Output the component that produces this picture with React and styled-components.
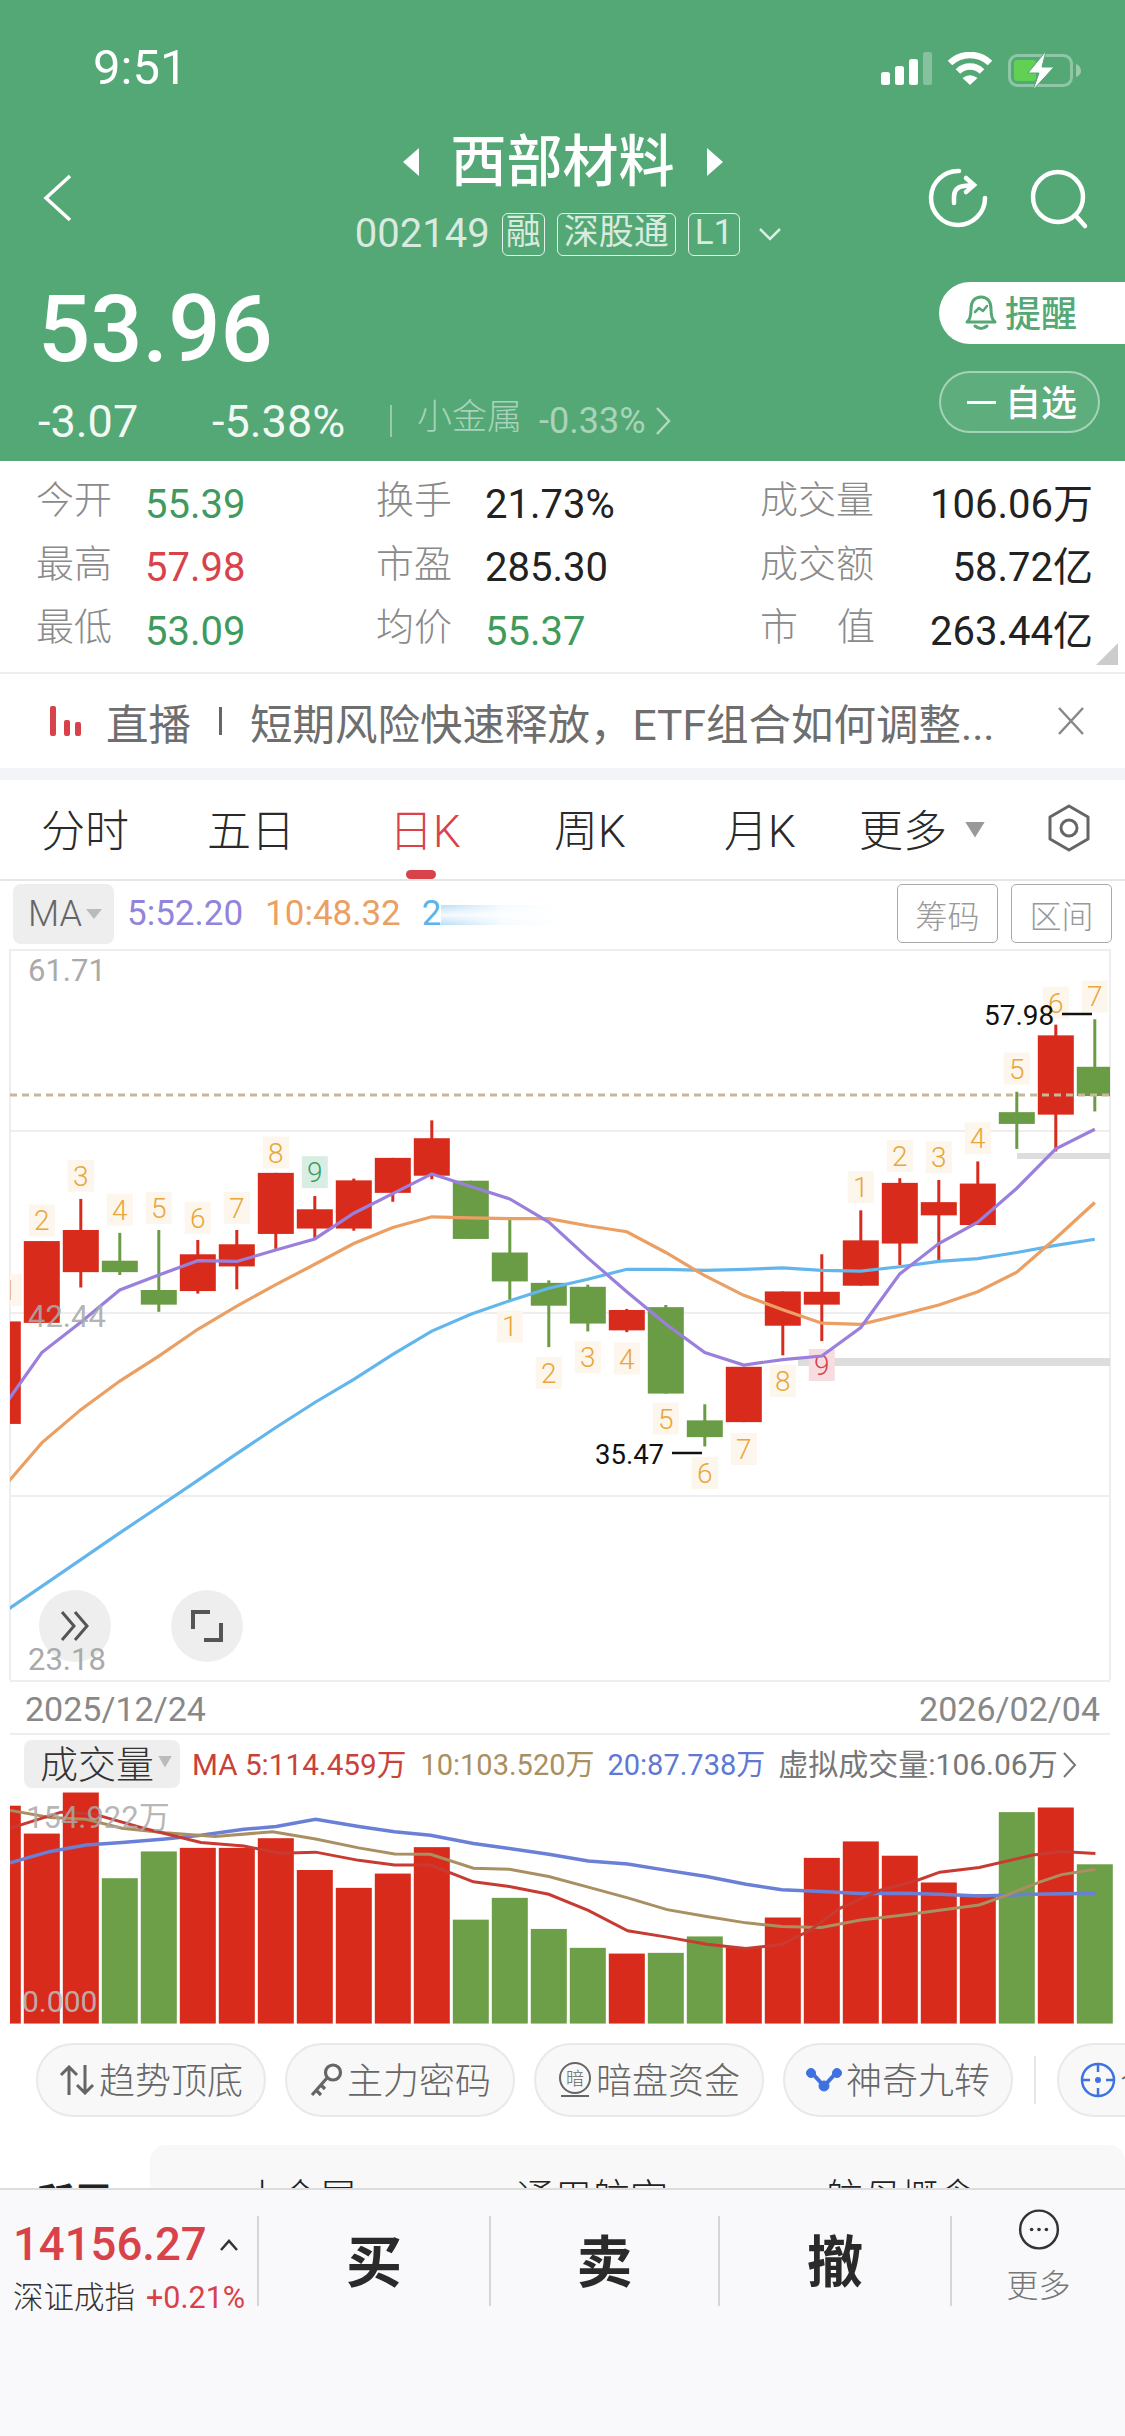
import React from "react";
import styled, { createGlobalStyle } from "styled-components";

const FONT = `Roboto, "Noto Sans CJK SC", sans-serif`;
const GREEN = "#53a875";
const RED = "#d92b1c";
const BAR_GREEN = "#6a9c45";

const GlobalStyle = createGlobalStyle`
  html, body {
    margin: 0;
    padding: 0;
    background: #fff;
    font-family: ${FONT};
  }
  * {
    box-sizing: border-box;
  }
`;

const Page = styled.div`
  width: 1125px;
  height: 2436px;
  overflow: hidden;
  background: #fff;
  display: flex;
  flex-direction: column;
`;

/* ---------- header ---------- */

const Header = styled.header`
  height: 461px;
  flex: none;
  background: ${GREEN};
  color: #fff;
  display: flex;
  flex-direction: column;
`;

const StatusBar = styled.div`
  height: 130px;
  padding: 44px 43px 0 93px;
  display: flex;
  justify-content: space-between;
  align-items: flex-start;
`;

const Clock = styled.span`
  font-size: 49px;
  line-height: 48px;
`;

const StatusIcons = styled.div`
  display: flex;
  align-items: flex-start;
  gap: 15px;
  padding-top: 8px;
`;

const Nav = styled.div`
  height: 152px;
  display: grid;
  grid-template-columns: 1fr auto 1fr;
`;

const BackIcon = styled.svg`
  margin: 44px 0 0 42px;
`;

const TitleBlock = styled.div`
  display: flex;
  flex-direction: column;
  align-items: center;
`;

const TitleRow = styled.div`
  display: flex;
  align-items: center;
  gap: 30px;
  height: 64px;
`;

const Title = styled.h1`
  margin: 0;
  font-size: 56px;
  line-height: 64px;
  font-weight: 500;
`;

const CodeRow = styled.div`
  margin-top: 18px;
  display: flex;
  align-items: center;
  gap: 12px;
  height: 44px;
  margin-left: 12px;
  color: rgba(255, 255, 255, 0.78);
`;

const Code = styled.span`
  font-size: 40px;
  line-height: 44px;
`;

const Chip = styled.span`
  height: 43px;
  min-width: 43px;
  padding: 0 6px;
  border: 1.5px solid rgba(255, 255, 255, 0.85);
  border-radius: 6px;
  font-size: 35px;
  line-height: 38px;
  font-weight: 400;
  text-align: center;
  white-space: nowrap;
  &:nth-child(2) {
    padding: 0 2px;
  }
`;

const NavActions = styled.div`
  display: flex;
  justify-content: flex-end;
  gap: 42px;
  padding: 38px 35px 0 0;
  align-items: flex-start;
`;

const PriceRow = styled.div`
  flex: 1;
  display: flex;
  justify-content: space-between;
`;

const PriceBlock = styled.div`
  padding-left: 38px;
`;

const BigPrice = styled.div`
  font-size: 92px;
  line-height: 96px;
  font-weight: 500;
`;

const ChangeRow = styled.div`
  display: flex;
  align-items: center;
  margin-top: 21px;
  height: 44px;
`;

const Change = styled.span`
  font-size: 45px;
  width: ${(p) => p.$w}px;
  color: #f2f8f4;
`;

const Sector = styled.span`
  margin-left: 38px;
  padding-left: 25px;
  border-left: 2px solid rgba(255, 255, 255, 0.4);
  height: 32px;
  display: flex;
  align-items: center;
  gap: 17px;
  color: rgba(255, 255, 255, 0.5);
`;

const SectorName = styled.span`
  font-size: 35px;
  line-height: 32px;
  font-weight: 300;
  margin-top: -6px;
`;

const SectorPct = styled.span`
  font-size: 36px;
`;

const SideButtons = styled.div`
  width: 186px;
  display: flex;
  flex-direction: column;
  gap: 27px;
`;

const RemindButton = styled.div`
  height: 62px;
  background: #fff;
  color: ${GREEN};
  border-radius: 31px 0 0 31px;
  display: flex;
  align-items: center;
  padding: 0 0 5px 24px;
  gap: 6px;
  font-size: 36px;
  font-weight: 500;
`;

const WatchButton = styled.div`
  width: 161px;
  height: 62px;
  border: 2px solid rgba(255, 255, 255, 0.45);
  background: rgba(255, 255, 255, 0.06);
  border-radius: 31px;
  display: flex;
  align-items: center;
  padding: 0 0 5px 64px;
  font-size: 36px;
  font-weight: 500;
  position: relative;
  &::before {
    content: "";
    position: absolute;
    left: 26px;
    top: 28px;
    width: 29px;
    height: 3px;
    background: #fff;
  }
`;

/* ---------- quote table ---------- */

const Stats = styled.section`
  position: relative;
  flex: none;
  height: 213px;
  padding: 11px 32px 0 36px;
  border-bottom: 2px solid #eee;
  display: grid;
  grid-template-columns: 340px 384px 333px;
  grid-auto-rows: 63.5px;
`;

const StatCell = styled.div`
  display: flex;
  align-items: center;
`;

const StatLabel = styled.span`
  font-size: 38px;
  line-height: 44px;
  margin-top: -7px;
  color: #8a8a8a;
  font-weight: 300;
  width: ${(p) => p.$w || 109}px;
  display: flex;
  justify-content: ${(p) => (p.$spread ? "space-between" : "flex-start")};
`;

const StatValue = styled.span`
  font-size: 40px;
  line-height: 44px;
  margin-top: 2px;
  color: ${(p) => p.$color || "#222"};
  margin-left: ${(p) => (p.$right ? "auto" : "0")};
`;

const CornerMark = styled.div`
  position: absolute;
  right: 7px;
  bottom: 7px;
  width: 22px;
  height: 22px;
  background: #ccc;
  clip-path: polygon(100% 0, 100% 100%, 0 100%);
`;

/* ---------- live strip ---------- */

const LiveStrip = styled.div`
  flex: none;
  height: 94px;
  display: flex;
  align-items: center;
  padding-left: 50px;
  color: #6e6e6e;
  font-size: 42.5px;
  font-weight: 400;
  white-space: nowrap;
`;

const LiveTag = styled.span`
  margin-left: 24px;
`;

const LiveSep = styled.span`
  width: 3px;
  height: 28px;
  margin: 0 28px;
  background: #666;
`;

const LiveClose = styled.svg`
  margin-left: auto;
  margin-right: 40px;
`;

const Band = styled.div`
  flex: none;
  height: 12px;
  background: #f3f4f8;
`;

/* ---------- period tabs ---------- */

const Tabs = styled.nav`
  flex: none;
  height: 101px;
  display: flex;
  align-items: center;
  border-bottom: 2px solid #e6e6e6;
  position: relative;
  padding-bottom: 4px;
`;

const TabCells = styled.div`
  display: grid;
  grid-template-columns: 170px 162px 186px 144px 196px 90px;
`;

const Tab = styled.span`
  font-size: 44px;
  font-weight: 300;
  color: ${(p) => (p.$active ? "#d8424a" : "#2a2a2a")};
  text-align: center;
`;

const TabMark = styled.i`
  position: absolute;
  left: 406px;
  bottom: 0;
  width: 30px;
  height: 9px;
  border-radius: 5px;
  background: #d8424a;
`;

const Caret = styled.i`
  display: inline-block;
  width: ${(p) => p.$w}px;
  height: ${(p) => p.$h}px;
  background: ${(p) => p.$color || "#999"};
  clip-path: polygon(0 0, 100% 0, 50% 100%);
  margin-left: ${(p) => p.$ml || 0}px;
  margin-top: ${(p) => p.$mt || 0}px;
  flex: none;
`;

const GearIcon = styled.svg`
  margin-left: auto;
  margin-right: 34px;
`;

/* ---------- indicator row ---------- */

const IndicatorRow = styled.div`
  flex: none;
  height: 68px;
  padding: 3px 13px 0;
  display: flex;
  align-items: flex-start;
`;

const Picker = styled.div`
  height: 60px;
  width: ${(p) => p.$w}px;
  padding-left: ${(p) => p.$pl}px;
  border-radius: 8px;
  background: #eee;
  display: flex;
  align-items: center;
  color: ${(p) => p.$color};
  font-size: ${(p) => p.$size}px;
  font-weight: 300;
`;

const MaValue = styled.span`
  font-size: 35px;
  line-height: 60px;
  color: ${(p) => p.$color};
  margin-left: ${(p) => p.$ml}px;
`;

const MaFade = styled.i`
  width: 125px;
  height: 20px;
  margin-top: 21px;
  background: linear-gradient(90deg, #b9def6, rgba(220, 240, 252, 0.3) 50%, rgba(255, 255, 255, 0));
  mask-image: linear-gradient(180deg, #000, rgba(0, 0, 0, 0.15) 50%, #000);
`;

const ToolButton = styled.span`
  width: 101px;
  height: 59px;
  border: 1.5px solid #aaa;
  border-radius: 5px;
  color: #999;
  font-size: 32px;
  font-weight: 300;
  display: flex;
  align-items: center;
  justify-content: center;
  margin-left: ${(p) => p.$ml};
`;

/* ---------- charts ---------- */

const KChartWrap = styled.div`
  flex: none;
  position: relative;
  height: 731px;
`;

const ChartSvg = styled.svg`
  display: block;
  text {
    font-family: ${FONT};
  }
`;

const RoundButton = styled.div`
  position: absolute;
  left: ${(p) => p.$left}px;
  top: 641px;
  width: 72px;
  height: 72px;
  border-radius: 50%;
  background: #eee;
  display: flex;
  align-items: center;
  justify-content: center;
`;

const AxisOverlay = styled.span`
  position: absolute;
  left: 28px;
  top: 696px;
  font-size: 31px;
  line-height: 30px;
  color: #aaa;
`;

const DateRow = styled.div`
  flex: none;
  height: 55px;
  margin: 0 15px 0 10px;
  padding: 3px 10px 0 15px;
  display: flex;
  justify-content: space-between;
  align-items: center;
  font-size: 34px;
  color: #888;
  border-top: 2px solid #eee;
  border-bottom: 2px solid #eee;
`;

const VolumeRow = styled.div`
  flex: none;
  height: 55px;
  padding: 5px 0 0 24px;
  display: flex;
  align-items: flex-start;
  white-space: nowrap;
`;

const VolPicker = styled(Picker)`
  height: 48px;
  padding-bottom: 5px;
`;

const VolLegend = styled.span`
  font-size: ${(p) => p.$size}px;
  line-height: 50px;
  color: ${(p) => p.$color};
  margin-left: ${(p) => p.$ml}px;
`;

/* ---------- pills ---------- */

const PillRow = styled.div`
  flex: none;
  height: 74px;
  margin-top: 2px;
  display: flex;
  gap: 19px;
  padding-left: 36px;
  overflow: hidden;
  align-items: center;
`;

const Pill = styled.div`
  flex: none;
  width: 230px;
  height: 74px;
  padding-bottom: 5px;
  border-radius: 37px;
  border: 2px solid #e9e9e9;
  background: #f8f8f8;
  color: #666;
  font-size: 36px;
  font-weight: 300;
  white-space: nowrap;
  display: flex;
  align-items: center;
  justify-content: center;
  gap: 4px;
  svg {
    margin-top: 5px;
    flex: none;
  }
`;

const PillDivider = styled.i`
  flex: none;
  width: 2px;
  height: 48px;
  margin: 0 2px;
  background: #e6e6e6;
`;

const Related = styled.div`
  flex: 1;
  min-height: 0;
  padding-top: 28px;
  overflow: hidden;
  display: flex;
  font-size: 38px;
  color: #222;
`;

const RelatedTitle = styled.span`
  width: 150px;
  padding: 26px 0 0 36px;
  font-weight: 700;
`;

const RelatedCard = styled.div`
  flex: 1;
  height: 120px;
  border-radius: 16px 16px 0 0;
  background: #f8f8f8;
  padding: 22px 0 0 93px;
  display: grid;
  grid-template-columns: 273px 309px 200px;
  font-weight: 300;
`;

/* ---------- footer ---------- */

const Footer = styled.footer`
  flex: none;
  height: 248px;
  border-top: 2px solid #ddd;
  background: #f9f9fb;
  display: flex;
  align-items: flex-start;
  padding-top: 26px;
`;

const IndexBlock = styled.div`
  width: 257px;
  height: 90px;
  padding-left: 13px;
`;

const IndexValue = styled.div`
  font-size: 45.5px;
  line-height: 50px;
  color: #d8424a;
  margin-top: 4px;
  font-weight: 500;
  display: flex;
  align-items: center;
`;

const IndexSub = styled.div`
  margin-top: 10px;
  white-space: nowrap;
  font-size: 30.5px;
  line-height: 36px;
  color: #333;
  font-weight: 300;
`;

const IndexPct = styled.span`
  color: #d8424a;
  margin-left: 11px;
  font-weight: 400;
`;

const TradeCell = styled.div`
  width: ${(p) => p.$w}px;
  height: 90px;
  padding-bottom: 8px;
  border-left: 2px solid #d6d6d6;
  display: flex;
  align-items: center;
  justify-content: center;
  font-size: 56px;
  font-weight: 700;
  color: #2a2a2a;
`;

const MoreCell = styled.div`
  flex: 1;
  height: 90px;
  border-left: 2px solid #d6d6d6;
  display: flex;
  flex-direction: column;
  align-items: center;
  font-size: 32px;
  font-weight: 300;
  color: #777;
`;

const MoreIcon = styled.svg`
  margin-top: -7px;
  margin-bottom: 10px;
`;

/* ---------- chart data, read off the screenshot at 2.8x ---------- */

const px = (i) => 2.8 + 39 * i;
const py = (z) => 940 + z / 2.8;
const vy = (z) => 1480 + z / 2.8;
const vx = (z) => z / 1.394;

// [index, body top, body bottom, wick top, wick bottom, up]
const CANDLES = [
  [0, 1068, 1355, 1068, 1355, 1],
  [1, 843, 1072, 843, 1072, 1],
  [2, 812, 930, 725, 973, 1],
  [3, 898, 930, 820, 938, 0],
  [4, 980, 1021, 812, 1041, 0],
  [5, 880, 983, 840, 990, 1],
  [6, 852, 914, 812, 978, 1],
  [7, 652, 823, 652, 865, 1],
  [8, 754, 808, 717, 838, 1],
  [9, 673, 808, 668, 814, 1],
  [10, 610, 708, 610, 733, 1],
  [11, 555, 660, 505, 670, 1],
  [12, 674, 837, 674, 837, 0],
  [13, 875, 956, 783, 1008, 0],
  [14, 960, 1024, 953, 1140, 0],
  [15, 971, 1074, 965, 1096, 0],
  [16, 1036, 1093, 1033, 1098, 1],
  [17, 1028, 1270, 1022, 1270, 0],
  [18, 1345, 1392, 1300, 1418, 0],
  [19, 1195, 1350, 1195, 1350, 1],
  [20, 984, 1080, 984, 1163, 1],
  [21, 985, 1021, 880, 1123, 1],
  [22, 841, 968, 757, 968, 1],
  [23, 680, 850, 667, 910, 1],
  [24, 734, 771, 672, 898, 1],
  [25, 682, 798, 620, 798, 1],
  [26, 482, 515, 425, 585, 0],
  [27, 267, 489, 237, 592, 1],
  [28, 355, 437, 222, 480, 0],
];

// [index, y, digit, tone]
const NINE_TURN = [
  [0.16, 980, 1], [1, 785, 2], [2, 660, 3], [3, 755, 4], [4, 750, 5],
  [5, 778, 6], [6, 750, 7], [7, 595, 8], [8, 650, 9, "green"],
  [13, 1082, 1], [14, 1212, 2], [15, 1168, 3], [16, 1172, 4], [17, 1340, 5],
  [18, 1492, 6], [19, 1425, 7], [20, 1235, 8], [21, 1190, 9, "red"],
  [22, 692, 1], [23, 605, 2], [24, 608, 3], [25, 555, 4], [26, 360, 5],
  [27, 175, 6], [28, 158, 7],
];

const TONES = {
  green: { box: "#d9eee3", text: "#3f9a68" },
  red: { box: "#f8dde0", text: "#d8424a" },
  orange: { box: "#fdf6ec", text: "#e8a63c" },
};

const MA5 = [1310, 1155, 1070, 980, 938, 898, 900, 868, 837, 765, 710, 655, 690, 725, 790, 890, 985, 1075, 1155, 1190, 1175, 1165, 1085, 935, 850, 790, 695, 585, 530];
const MA10 = [1535, 1408, 1315, 1235, 1165, 1090, 1025, 965, 908, 850, 805, 775, 778, 780, 780, 800, 817, 875, 940, 995, 1035, 1073, 1076, 1050, 1022, 985, 930, 835, 735];
const MA20 = [1884, 1810, 1735, 1660, 1587, 1513, 1438, 1365, 1295, 1230, 1160, 1095, 1048, 1010, 975, 950, 922, 922, 925, 922, 918, 925, 927, 915, 900, 892, 875, 855, 838];

const VOL_TOPS = [
  [912, 1], [990, 1], [875, 1], [1115, 0], [1040, 0], [1030, 1], [1030, 1], [1003, 1], [1092, 1], [1142, 1],
  [1102, 1], [1028, 1], [1231, 0], [1170, 0], [1257, 0], [1310, 0], [1326, 1], [1324, 0], [1278, 0], [1310, 1],
  [1225, 1], [1058, 1], [1012, 1], [1052, 1], [1127, 1], [1160, 1], [930, 0], [917, 1], [1076, 0],
];

const VOL_RED = [[14, 975], [85, 930], [130, 935], [200, 975], [280, 1015], [340, 1025], [390, 1045], [440, 1042], [500, 1065], [550, 1078], [600, 1078], [660, 1125], [710, 1138], [765, 1160], [820, 1205], [875, 1262], [930, 1280], [985, 1300], [1040, 1312], [1090, 1300], [1130, 1260], [1170, 1200], [1225, 1150], [1280, 1120], [1310, 1098], [1365, 1085], [1440, 1050], [1480, 1040], [1527, 1046]];
const VOL_TAN = [[14, 925], [70, 945], [120, 950], [170, 975], [230, 988], [300, 998], [380, 985], [440, 1005], [500, 1030], [550, 1047], [600, 1048], [660, 1087], [710, 1090], [765, 1110], [820, 1140], [875, 1170], [930, 1203], [985, 1222], [1040, 1240], [1090, 1250], [1145, 1253], [1200, 1232], [1260, 1218], [1310, 1205], [1365, 1190], [1400, 1165], [1450, 1125], [1480, 1105], [1527, 1090]];
const VOL_BLUE = [[14, 1072], [70, 1040], [120, 1022], [170, 1015], [230, 1005], [280, 995], [340, 978], [385, 970], [440, 950], [500, 970], [550, 985], [600, 995], [660, 1018], [710, 1032], [765, 1048], [820, 1067], [875, 1075], [930, 1093], [985, 1110], [1040, 1132], [1090, 1147], [1145, 1152], [1200, 1158], [1260, 1157], [1310, 1160], [1365, 1165], [1440, 1160], [1527, 1157]];

const STATS = [
  [["今开", "55.39", "#3f9a5e"], ["换手", "21.73%"], ["成交量", "106.06万"]],
  [["最高", "57.98", "#d8424a"], ["市盈", "285.30"], ["成交额", "58.72亿"]],
  [["最低", "53.09", "#3f9a5e"], ["均价", "55.37", "#3f9a5e"], ["市值", "263.44亿"]],
];

const maPath = (ys) => ys.map((z, i) => `${px(i)},${py(z)}`).join(" ");
const volPath = (pts) => pts.map(([x, y]) => `${vx(x)},${vy(y)}`).join(" ");

function StatusGlyphs() {
  return (
    <StatusIcons>
      <svg width="51" height="33" viewBox="0 0 51 33">
        <rect x="0" y="20" width="9" height="13" rx="2.5" fill="#fff" />
        <rect x="14" y="14" width="9" height="19" rx="2.5" fill="#fff" />
        <rect x="28" y="7" width="9" height="26" rx="2.5" fill="#fff" />
        <rect x="42" y="0" width="9" height="33" rx="2.5" fill="#fff" opacity="0.3" />
      </svg>
      <svg width="46" height="33" viewBox="0 0 46 33" fill="none" stroke="#fff" strokeWidth="6.5">
        <path d="M3 11 A29 29 0 0 1 43 11" />
        <path d="M11 19.5 A17 17 0 0 1 35 19.5" />
        <path d="M15.5 26 Q23 20.5 30.5 26 L23 33 Z" fill="#fff" stroke="none" />
      </svg>
      <svg width="74" height="36" viewBox="0 -2 74 36" style={{ overflow: "visible" }}>
        <rect x="1.5" y="1.5" width="62" height="30" rx="8" fill="none" stroke="#fff" strokeOpacity="0.35" strokeWidth="3" />
        <rect x="6" y="6" width="22" height="21" rx="3" fill="#62cf55" />
        <path d="M68 10 Q73 12 73 17 Q73 21 68 23 Z" fill="#fff" opacity="0.4" />
        <path d="M38 -3 L20 19 L31 19 L25 36 L46 13 L34 13 Z" fill="#fff" stroke={GREEN} strokeWidth="1" />
      </svg>
    </StatusIcons>
  );
}

function KChart() {
  const top = 949;
  return (
    <KChartWrap>
      <ChartSvg width="1125" height="731" viewBox={`0 ${top} 1125 731`}>
        <defs>
          <clipPath id="kclip">
            <rect x="10" y={top} width="1100" height="731" />
          </clipPath>
        </defs>
        {/* frame and grid */}
        <g stroke="#eee" strokeWidth="2">
          <line x1="10" x2="1110" y1="950" y2="950" />
          <line x1="10" x2="1110" y1="1131" y2="1131" />
          <line x1="10" x2="1110" y1="1313" y2="1313" />
          <line x1="10" x2="1110" y1="1496" y2="1496" />
          <line x1="10" x2="10" y1="949" y2="1680" />
          <line x1="1110" x2="1110" y1="949" y2="1680" />
        </g>
        <g clipPath="url(#kclip)">
          {/* pressure levels */}
          <rect x="1017" y="1153" width="93" height="6" fill="#ddd" />
          <rect x="798" y="1358" width="312" height="8" fill="#ddd" />
          {NINE_TURN.map(([i, z, n, tone]) => {
            const t = TONES[tone || "orange"];
            return (
              <g key={`${i}-${n}`}>
                <rect x={px(i) - 13} y={py(z) - 16} width="26" height="32" fill={t.box} />
                <text x={px(i)} y={py(z) + 10} fontSize="28" fontWeight="300" textAnchor="middle" fill={t.text}>
                  {n}
                </text>
              </g>
            );
          })}
          {CANDLES.map(([i, a, b, wa, wb, up]) => {
            const c = up ? RED : BAR_GREEN;
            return (
              <g key={i} fill={c}>
                <rect x={px(i) - 1.5} y={py(wa)} width="3" height={py(wb) - py(wa)} />
                <rect x={px(i) - 18} y={py(a)} width="36" height={py(b) - py(a)} />
              </g>
            );
          })}
          <line x1="10" x2="1110" y1="1095" y2="1095" stroke="#c9b79a" strokeWidth="3" strokeDasharray="7 5" />
          <polyline points={maPath(MA20)} fill="none" stroke="#63b6ec" strokeWidth="3.2" />
          <polyline points={maPath(MA10)} fill="none" stroke="#eb9f62" strokeWidth="3.2" />
          <polyline points={maPath(MA5)} fill="none" stroke="#9a80dc" strokeWidth="3.2" />
        </g>
        {/* high and low marks */}
        <text x="984" y="1025" fontSize="28" fill="#111">57.98</text>
        <line x1="1062" x2="1092" y1="1014" y2="1014" stroke="#111" strokeWidth="2.5" />
        <text x="595" y="1464" fontSize="27.5" fill="#111">35.47</text>
        <line x1="672" x2="702" y1="1453" y2="1453" stroke="#111" strokeWidth="2.5" />
        {/* axis */}
        <text x="28" y="981" fontSize="31" fill="#aaa">61.71</text>
        <text x="28" y="1327" fontSize="31" fill="#aaa" fillOpacity="0.9">42.44</text>
      </ChartSvg>
      <RoundButton $left={39}>
        <svg width="36" height="36" viewBox="0 0 36 36" fill="none" stroke="#555" strokeWidth="3">
          <path d="M5 4 L17 18 L5 32" />
          <path d="M18 4 L30 18 L18 32" />
        </svg>
      </RoundButton>
      <RoundButton $left={171}>
        <svg width="34" height="34" viewBox="0 0 34 34" fill="none" stroke="#555" strokeWidth="4">
          <path d="M20 3 H3 V20" />
          <path d="M14 31 H31 V14" />
        </svg>
      </RoundButton>
      <AxisOverlay>23.18</AxisOverlay>
    </KChartWrap>
  );
}

function VolumeChart() {
  const top = 1790;
  const base = vy(1522);
  return (
    <ChartSvg width="1125" height="251" viewBox={`0 ${top} 1125 251`}>
      <defs>
        <clipPath id="vclip">
          <rect x="10" y={top} width="1105" height="251" />
        </clipPath>
      </defs>
      <g clipPath="url(#vclip)">
        {VOL_TOPS.map(([z, up], i) => (
          <rect
            key={i}
            x={px(i) - 18}
            y={vy(z)}
            width="36"
            height={base - vy(z)}
            fill={up ? RED : "#6c9f48"}
          />
        ))}
        <polyline points={volPath(VOL_BLUE)} fill="none" stroke="#6a80d6" strokeWidth="3.5" />
        <polyline points={volPath(VOL_TAN)} fill="none" stroke="#a98f61" strokeWidth="3" />
        <polyline points={volPath(VOL_RED)} fill="none" stroke="#c83b32" strokeWidth="3" />
      </g>
      <text x="26" y="1828" fontSize="31" fill="#aaa" fillOpacity="0.85">154.922万</text>
      <text x="22" y="2012" fontSize="30" fill="#bbb" fillOpacity="0.9">0.000</text>
    </ChartSvg>
  );
}

export default function App() {
  return (
    <Page>
      <GlobalStyle />
      <Header>
        <StatusBar>
          <Clock>9:51</Clock>
          <StatusGlyphs />
        </StatusBar>
        <Nav>
          <BackIcon width="30" height="48" viewBox="0 0 30 48" fill="none" stroke="#fff" strokeWidth="3.5">
            <path d="M28 2 L4 24 L28 46" />
          </BackIcon>
          <TitleBlock>
            <TitleRow>
              <svg width="20" height="28" viewBox="0 0 20 28">
                <path d="M18 0 V28 L2 14 Z" fill="#fff" />
              </svg>
              <Title>西部材料</Title>
              <svg width="20" height="28" viewBox="0 0 20 28">
                <path d="M2 0 V28 L18 14 Z" fill="#fff" />
              </svg>
            </TitleRow>
            <CodeRow>
              <Code>002149</Code>
              <Chip>融</Chip>
              <Chip>深股通</Chip>
              <Chip>L1</Chip>
              <svg width="24" height="14" viewBox="0 0 24 14" fill="none" stroke="rgba(255,255,255,.8)" strokeWidth="2.5" style={{ marginLeft: 6 }}>
                <path d="M2 2 L12 12 L22 2" />
              </svg>
            </CodeRow>
          </TitleBlock>
          <NavActions>
            <svg width="60" height="60" viewBox="0 0 60 60" fill="none" stroke="#fff" strokeWidth="4.5" strokeLinecap="round">
              <path d="M31 3 A27 27 0 1 0 57 30" />
              <path d="M26 35 V29 Q26 19 36 18 L45 17" />
              <path d="M38 10 L46 17 L38 24" />
            </svg>
            <svg width="60" height="64" viewBox="0 0 60 64" fill="none" stroke="#fff" strokeWidth="4.5" strokeLinecap="round">
              <circle cx="28" cy="29" r="25" />
              <path d="M47 49 L55 58" />
            </svg>
          </NavActions>
        </Nav>
        <PriceRow>
          <PriceBlock>
            <BigPrice>53.96</BigPrice>
            <ChangeRow>
              <Change $w={174}>-3.07</Change>
              <Change $w={140}>-5.38%</Change>
              <Sector>
                <SectorName>小金属</SectorName>
                <SectorPct>-0.33%</SectorPct>
                <svg width="16" height="30" viewBox="0 0 16 30" fill="none" stroke="rgba(255,255,255,.55)" strokeWidth="2.5" style={{ marginLeft: -8 }}>
                  <path d="M2 2 L14 15 L2 28" />
                </svg>
              </Sector>
            </ChangeRow>
          </PriceBlock>
          <SideButtons>
            <RemindButton>
              <svg width="36" height="38" viewBox="0 0 36 38" fill="none" stroke={GREEN} strokeWidth="3" strokeLinejoin="round" strokeLinecap="round" style={{ marginTop: 5 }}>
                <path d="M4 28 Q8 25 8 15 C8 7 12 3 18 3 C24 3 28 7 28 15 Q28 25 32 28 Z" />
                <path d="M12 32 Q18 37 24 32" />
                <path d="M12 18 L16 14 L20 17 L24 12" strokeWidth="2.5" />
              </svg>
              提醒
            </RemindButton>
            <WatchButton>自选</WatchButton>
          </SideButtons>
        </PriceRow>
      </Header>

      <Stats>
        {STATS.flat().map(([label, value, color], i) => {
          const third = i % 3 === 2;
          return (
            <StatCell key={label}>
              <StatLabel $w={third ? 115 : 109} $spread={label === "市值"}>
                {label === "市值" ? (
                  <>
                    <span>市</span>
                    <span>值</span>
                  </>
                ) : (
                  label
                )}
              </StatLabel>
              <StatValue $color={color} $right={third}>
                {value}
              </StatValue>
            </StatCell>
          );
        })}
        <CornerMark />
      </Stats>

      <LiveStrip>
        <svg width="32" height="30" viewBox="0 0 32 30" fill="#d8424a">
          <rect x="0" y="0" width="6" height="30" rx="2" />
          <rect x="14" y="14" width="6" height="16" rx="2" />
          <rect x="25" y="16" width="6" height="14" rx="2" />
        </svg>
        <LiveTag>直播</LiveTag>
        <LiveSep />
        短期风险快速释放，ETF组合如何调整...
        <LiveClose width="28" height="28" viewBox="0 0 28 28" stroke="#888" strokeWidth="2.5">
          <path d="M2 1 L26 27 M26 1 L2 27" />
        </LiveClose>
      </LiveStrip>
      <Band />

      <Tabs>
        <TabCells>
          <Tab>分时</Tab>
          <Tab>五日</Tab>
          <Tab $active>日K</Tab>
          <Tab>周K</Tab>
          <Tab>月K</Tab>
          <Tab>更多</Tab>
        </TabCells>
        <Caret $w={20} $h={16} $ml={17} $mt={4} />
        <GearIcon width="44" height="48" viewBox="0 0 44 48" fill="none" stroke="#666" strokeWidth="3" strokeLinejoin="round">
          <path d="M22 2 L41 13 V35 L22 46 L3 35 V13 Z" />
          <circle cx="22" cy="24" r="8" />
        </GearIcon>
        <TabMark />
      </Tabs>

      <IndicatorRow>
        <Picker $w={101} $pl={15} $color="#666" $size={36}>
          MA
          <Caret $w={16} $h={10} $ml={4} $color="#bbb" />
        </Picker>
        <MaValue $color="#9284dc" $ml={13}>5:52.20</MaValue>
        <MaValue $color="#eb9f62" $ml={22}>10:48.32</MaValue>
        <MaValue $color="#5cb4ea" $ml={21}>2</MaValue>
        <MaFade />
        <ToolButton $ml="auto">筹码</ToolButton>
        <ToolButton $ml="13px">区间</ToolButton>
      </IndicatorRow>

      <KChart />

      <DateRow>
        <span>2025/12/24</span>
        <span>2026/02/04</span>
      </DateRow>

      <VolumeRow>
        <VolPicker $w={156} $pl={16} $color="#333" $size={38}>
          成交量
          <Caret $w={14} $h={12} $ml={4} $color="#bbb" />
        </VolPicker>
        <VolLegend $size={29.7} $color="#c8423a" $ml={12}>MA 5:114.459万</VolLegend>
        <VolLegend $size={29} $color="#a98f61" $ml={14}>10:103.520万</VolLegend>
        <VolLegend $size={29} $color="#5f78d4" $ml={13}>20:87.738万</VolLegend>
        <VolLegend $size={30} $color="#777" $ml={13}>虚拟成交量:106.06万</VolLegend>
        <svg width="16" height="28" viewBox="0 0 16 28" fill="none" stroke="#777" strokeWidth="2" style={{ marginTop: 11, marginLeft: 4 }}>
          <path d="M2 2 L13 14 L2 26" />
        </svg>
      </VolumeRow>

      <VolumeChart />

      <PillRow>
        <Pill>
          <svg width="36" height="30" viewBox="0 0 36 30" fill="none" stroke="#666" strokeWidth="3">
            <path d="M10 30 V2 M2 10 L10 2 L18 10" />
            <path d="M26 0 V28 M18 20 L26 28 L34 20" />
          </svg>
          趋势顶底
        </Pill>
        <Pill>
          <svg width="34" height="34" viewBox="0 0 34 34" fill="none" stroke="#666" strokeWidth="3.2">
            <circle cx="24" cy="9.5" r="7.5" />
            <path d="M18 15 L3 32 M7 27 L12 32 M12 22 L16 26" />
          </svg>
          主力密码
        </Pill>
        <Pill>
          <svg width="34" height="36" viewBox="0 0 34 36">
            <circle cx="17" cy="16" r="15" fill="none" stroke="#666" strokeWidth="2" />
            <path d="M3 34 H31" stroke="#666" strokeWidth="2" />
            <text x="17" y="23" fontSize="18" textAnchor="middle" fill="#666" fontFamily={FONT}>暗</text>
          </svg>
          暗盘资金
        </Pill>
        <Pill>
          <svg width="36" height="24" viewBox="0 0 36 24" fill="#3f72e0" stroke="#3f72e0">
            <path d="M6 5 L18 18 L30 5" fill="none" strokeWidth="4" />
            <circle cx="5" cy="5" r="4.5" />
            <circle cx="31" cy="5" r="4.5" />
            <circle cx="18" cy="18" r="5" />
          </svg>
          神奇九转
        </Pill>
        <PillDivider />
        <Pill>
          <svg width="36" height="36" viewBox="0 0 36 36" fill="none" stroke="#3f72e0" strokeWidth="2.5">
            <circle cx="18" cy="18" r="16" />
            <path d="M2 18 H10 M26 18 H34 M18 2 V10 M18 26 V34" />
            <circle cx="18" cy="18" r="3" fill="#3f72e0" stroke="none" />
          </svg>
          个股雷达
        </Pill>
      </PillRow>

      <Related>
        <RelatedTitle>所属</RelatedTitle>
        <RelatedCard>
          <span>小金属</span>
          <span>通用航空</span>
          <span>航母概念</span>
        </RelatedCard>
      </Related>

      <Footer>
        <IndexBlock>
          <IndexValue>
            14156.27
            <svg width="20" height="14" viewBox="0 0 20 14" fill="none" stroke="#333" strokeWidth="2.5" style={{ marginLeft: 12 }}>
              <path d="M2 12 L10 3 L18 12" />
            </svg>
          </IndexValue>
          <IndexSub>
            深证成指
            <IndexPct>+0.21%</IndexPct>
          </IndexSub>
        </IndexBlock>
        <TradeCell $w={232}>买</TradeCell>
        <TradeCell $w={229}>卖</TradeCell>
        <TradeCell $w={232}>撤</TradeCell>
        <MoreCell>
          <MoreIcon width="50" height="50" viewBox="0 0 50 50" fill="none" stroke="#333" strokeWidth="3">
            <circle cx="25" cy="25" r="23" />
            <g fill="#333" stroke="none">
              <circle cx="16" cy="25" r="2.2" />
              <circle cx="25" cy="25" r="2.2" />
              <circle cx="34" cy="25" r="2.2" />
            </g>
          </MoreIcon>
          更多
        </MoreCell>
      </Footer>
    </Page>
  );
}
